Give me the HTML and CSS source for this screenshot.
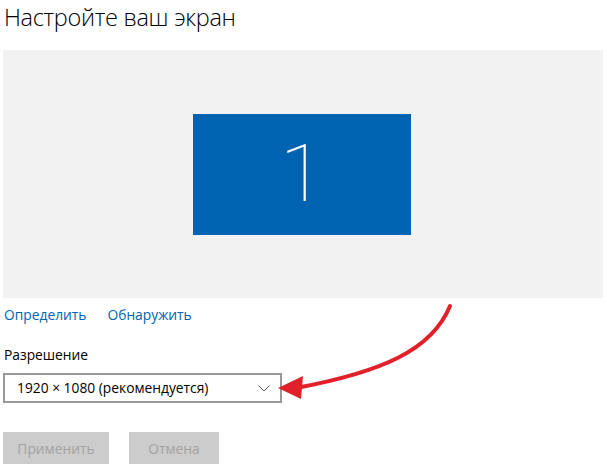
FILE: index.html
```html
<!DOCTYPE html>
<html lang="ru">
<head>
<meta charset="utf-8">
<link rel="stylesheet" href="styles.css">
</head>
<body>
<div class="page">
  <h1 class="title">Настройте ваш экран</h1>
  <div class="panel">
    <div class="monitor">1</div>
  </div>
  <div class="links">
    <a class="link">Определить</a>
    <a class="link">Обнаружить</a>
  </div>
  <div class="label">Разрешение</div>
  <div class="select">
    <span class="select-text">1920 × 1080 (рекомендуется)</span>
    <svg class="chevron" width="12" height="7" viewBox="0 0 12 7"><path d="M0.5 0.5 L6 6 L11.5 0.5" fill="none" stroke="#555" stroke-width="1"/></svg>
  </div>
  <div class="buttons">
    <div class="btn btn-apply">Применить</div>
    <div class="btn btn-cancel">Отмена</div>
  </div>
  <svg class="arrow" width="607" height="473" viewBox="0 0 607 473">
    <path d="M450 306 C 432 350, 382 372, 296 388" fill="none" stroke="#e2202a" stroke-width="4" stroke-linecap="round"/>
    <polygon points="278,388 303,376 301,399" fill="#e2202a"/>
  </svg>
</div>
</body>
</html>
```
FILE: styles.css
```css
html, body {
  margin: 0;
  padding: 0;
  background: #fff;
}
.page {
  position: relative;
  width: 607px;
  height: 473px;
  overflow: hidden;
  padding-left: 3px;
  box-sizing: border-box;
  font-family: "Open Sans", "Noto Sans", sans-serif;
  color: #000;
}
.title {
  margin: 0;
  padding-left: 1px;
  height: 50px;
  font-size: 23.5px;
  font-weight: 300;
  line-height: 34px;
  letter-spacing: -0.3px;
}
.panel {
  width: 600px;
  height: 248px;
  background: #f2f2f2;
  display: flex;
  align-items: center;
  justify-content: center;
}
.monitor {
  width: 218px;
  height: 121px;
  background: #0063b1;
  color: #fff;
  display: flex;
  align-items: center;
  justify-content: center;
  font-family: "Roboto", sans-serif;
  font-weight: 100;
  font-size: 80px;
  line-height: 1;
  margin-left: -2px;
}
.links {
  display: flex;
  gap: 21px;
  margin-top: 7px;
  height: 22px;
  padding-left: 1px;
}
.link {
  color: #0063b1;
  font-size: 13.8px;
  line-height: 20px;
}
.label {
  margin-top: 18px;
  padding-left: 1px;
  font-size: 13.8px;
  line-height: 20px;
  height: 20px;
}
.select {
  margin-top: 8px;
  width: 279px;
  height: 30px;
  box-sizing: border-box;
  border: 2px solid #999;
  display: flex;
  align-items: center;
  justify-content: space-between;
  padding: 0 10px 0 12px;
}
.select-text {
  font-size: 13.8px;
  line-height: 20px;
}
.chevron {
  display: block;
}
.buttons {
  display: flex;
  gap: 20px;
  margin-top: 29px;
}
.btn {
  height: 32px;
  background: #cccccc;
  color: #a2a2a2;
  font-size: 13.8px;
  display: flex;
  align-items: center;
  justify-content: center;
}
.btn-apply {
  width: 106px;
}
.btn-cancel {
  width: 90px;
}
.arrow {
  position: absolute;
  left: 0;
  top: 0;
  pointer-events: none;
}
```
